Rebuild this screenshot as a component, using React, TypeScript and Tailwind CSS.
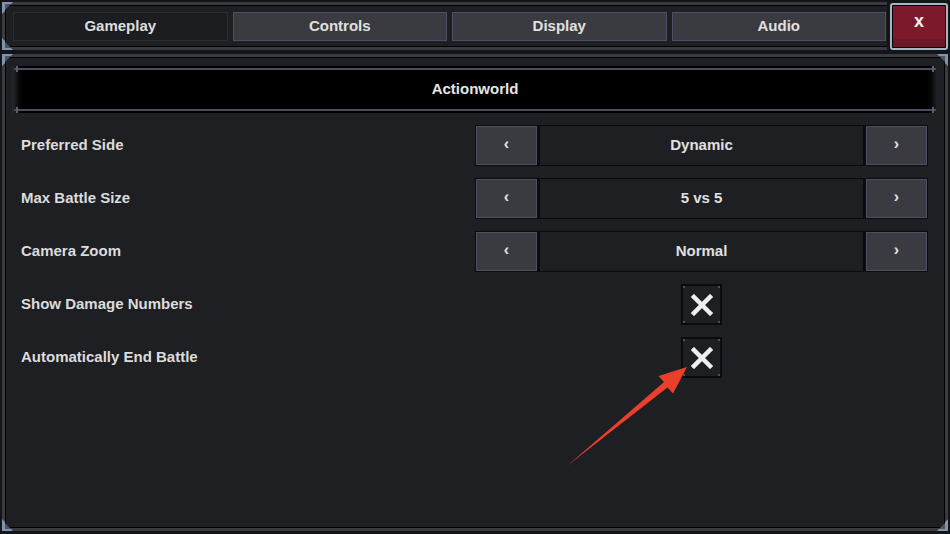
import React from 'react';

const font = { fontFamily: '"Liberation Sans", "DejaVu Sans", sans-serif' };

const tabs = ['Gameplay', 'Controls', 'Display', 'Audio'];

const rows = [
  { label: 'Preferred Side', kind: 'select', value: 'Dynamic' },
  { label: 'Max Battle Size', kind: 'select', value: '5 vs 5' },
  { label: 'Camera Zoom', kind: 'select', value: 'Normal' },
  { label: 'Show Damage Numbers', kind: 'check' },
  { label: 'Automatically End Battle', kind: 'check' },
];

const Corner = ({ className }: { className: string }) => (
  <svg className={`absolute w-[12px] h-[12px] pointer-events-none ${className}`} viewBox="0 0 12 12">
    <path d="M0 0 H11 L9 2 H3 V9 L0 12 Z" fill="#8393a8" />
    <path d="M3 2 H9 L3 8 Z" fill="#4b5568" />
  </svg>
);

const Selector = ({ value }: { value: string }) => (
  <div className="flex h-[41px] w-[453px] bg-[#0b0b0c] p-[1px] gap-[3px]">
    <button className="w-[61px] bg-[#3a3b40] border border-[#4d5064] text-[#e4e4e4] text-[16px] font-bold leading-none pb-[3px]">‹</button>
    <div className="flex-1 bg-[#1e1f23] flex items-center justify-center text-[15px] font-bold text-[#e0e0e0]">
      {value}
    </div>
    <button className="w-[61px] bg-[#3a3b40] border border-[#4d5064] text-[#e4e4e4] text-[16px] font-bold leading-none pb-[3px]">›</button>
  </div>
);

const Check = () => (
  <div className="relative w-[41px] h-[41px] bg-[#0b0b0c] p-[2px]">
    <div className="relative w-full h-full bg-[#1e1f23] flex items-center justify-center">
      <span className="absolute left-0 top-0 w-[2px] h-[2px] bg-[#4d5064]" />
      <span className="absolute right-0 top-0 w-[2px] h-[2px] bg-[#4d5064]" />
      <span className="absolute left-0 bottom-0 w-[2px] h-[2px] bg-[#4d5064]" />
      <span className="absolute right-0 bottom-0 w-[2px] h-[2px] bg-[#4d5064]" />
      <svg width="22" height="22" viewBox="0 0 22 22">
        <path d="M3 3 L19 19 M19 3 L3 19" stroke="#efefef" strokeWidth="4.5" strokeLinecap="square" />
      </svg>
    </div>
  </div>
);

export default function App() {
  return (
    <div className="relative w-[950px] h-[534px] bg-[#141518] overflow-hidden text-[#e0e0e0]" style={font}>
      {/* top tab bar */}
      <div className="flex h-[54px] pt-[2px]">
        <div className="relative flex-1 ml-[2px] h-[48px] border-y-[3px] border-l-[3px] border-[#3a3b40] bg-[#1e1f23]">
          <div className="h-full border-y border-l border-black flex items-center gap-[5px] pl-[7px] pr-[1px]">
            {tabs.map((t, i) => (
              <div
                key={t}
                className={`flex-1 h-[29px] flex items-center justify-center text-[15px] font-bold ${
                  i === 0
                    ? 'bg-[#1c1d21] border border-[#2b2c31] text-[#dedede]'
                    : 'bg-[#3a3b40] border border-[#4d5064] text-[#e0e0e0]'
                }`}
              >
                {t}
              </div>
            ))}
          </div>
          <Corner className="-left-[3px] -top-[3px]" />
          <Corner className="-left-[3px] -bottom-[3px] -scale-y-100" />
        </div>
        <div className="w-[58px] h-[47px] ml-[3px] mr-[2px] mt-[1px] rounded-[3px] border-2 border-[#a7b5c4] bg-black p-[1px]">
          <div className="h-full flex flex-col">
            <div className="flex-1 bg-[#7c1a2b] flex items-center justify-center text-[18px] font-bold text-[#f0f0f0] leading-none pb-[3px]">
              x
            </div>
            <div className="h-[8px] bg-[#6c1725]" />
          </div>
        </div>
      </div>

      {/* main panel */}
      <div className="relative mx-[2px] h-[477px] border-[3px] border-[#3a3b40] bg-[#1e1f23]">
        <div className="h-full border border-black">
          <div className="relative mx-[6px] mt-[8px] h-[47px] bg-black flex items-center justify-center">
            <div className="absolute left-0 top-0 bottom-0 w-[14px] bg-gradient-to-r from-[#2a2b30] to-black" />
            <div className="absolute right-0 top-0 bottom-0 w-[14px] bg-gradient-to-l from-[#232429] to-black" />
            <div className="absolute left-[2px] right-[2px] top-[2px] h-[2px] bg-[#4a4e60]" />
            <div className="absolute left-[2px] right-[2px] bottom-[2px] h-[2px] bg-[#4a4e60]" />
            <div className="absolute left-[4px] top-0 w-[2px] h-[6px] bg-[#5a5f73]" />
            <div className="absolute right-[4px] top-0 w-[2px] h-[6px] bg-[#5a5f73]" />
            <div className="absolute left-[4px] bottom-0 w-[2px] h-[6px] bg-[#5a5f73]" />
            <div className="absolute right-[4px] bottom-0 w-[2px] h-[6px] bg-[#5a5f73]" />
            <span className="relative text-[15px] font-bold text-[#e6e6e6]">Actionworld</span>
          </div>

          <div className="mt-[6px] flex flex-col">
            {rows.map((r) => (
              <div key={r.label} className="h-[53px] flex items-center pl-[15px] pr-[16px]">
                <span className="flex-1 text-[15px] font-bold text-[#dcdcdc]">{r.label}</span>
                <div className="w-[453px] flex justify-center">
                  {r.kind === 'select' ? <Selector value={r.value!} /> : <Check />}
                </div>
              </div>
            ))}
          </div>
        </div>
        <Corner className="-left-[3px] -top-[3px]" />
        <Corner className="-right-[3px] -top-[3px] -scale-x-100" />
        <Corner className="-left-[3px] -bottom-[3px] -scale-y-100" />
        <Corner className="-right-[3px] -bottom-[3px] -scale-100" />
      </div>

      {/* annotation arrow */}
      <svg className="absolute left-0 top-0 pointer-events-none" width="950" height="534">
        <polygon
          points="567,466 667.5,387.5 673,393.5 687,367 658.5,376 664,382"
          fill="#ea3f2b"
        />
      </svg>
    </div>
  );
}
